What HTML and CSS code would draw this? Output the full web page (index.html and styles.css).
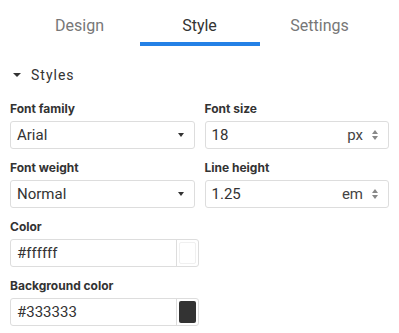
FILE: index.html
```html
<!DOCTYPE html>
<html lang="en">
<head>
    <meta charset="UTF-8" />
    <meta name="viewport" content="width=device-width, initial-scale=1" />
    <title>Style panel</title>
    <link rel="stylesheet" href="styles.css">
</head>
<body>
    <div class="tabs">
        <div class="tab">Design</div>
        <div class="tab active">Style</div>
        <div class="tab">Settings</div>
    </div>

    <div class="section-title">
        <span class="caret-down"></span>
        <span>Styles</span>
    </div>

    <div class="grid">
        <div class="field">
            <label>Font family</label>
            <div class="box select">
                <span class="value">Arial</span>
                <span class="caret-down small"></span>
            </div>
        </div>
        <div class="field">
            <label>Font size</label>
            <div class="box number">
                <span class="value">18</span>
                <span class="unit">px</span>
                <span class="spin"><i class="up"></i><i class="down"></i></span>
            </div>
        </div>
        <div class="field">
            <label>Font weight</label>
            <div class="box select">
                <span class="value">Normal</span>
                <span class="caret-down small"></span>
            </div>
        </div>
        <div class="field">
            <label>Line height</label>
            <div class="box number">
                <span class="value">1.25</span>
                <span class="unit">em</span>
                <span class="spin"><i class="up"></i><i class="down"></i></span>
            </div>
        </div>
        <div class="field">
            <label>Color</label>
            <div class="box color">
                <span class="value">#ffffff</span>
                <span class="swatch-cell"><span class="swatch light"></span></span>
            </div>
        </div>
        <div class="field"></div>
        <div class="field">
            <label>Background color</label>
            <div class="box color">
                <span class="value">#333333</span>
                <span class="swatch-cell"><span class="swatch dark"></span></span>
            </div>
        </div>
    </div>
</body>
</html>
```

FILE: styles.css
```css
body {
    margin: 0;
    padding: 0 10px;
    font-family: Roboto, "Liberation Sans", sans-serif;
    color: #333;
    background: #fff;
}
.tabs {
    display: flex;
    justify-content: center;
    padding-top: 15px;
}
.tab {
    width: 120px;
    text-align: center;
    font-size: 16px;
    color: #777;
    height: 27px;
    line-height: 22px;
    border-bottom: 4px solid transparent;
}
.tab.active {
    color: #333;
    border-bottom-color: #2481e6;
}
.section-title {
    display: flex;
    align-items: center;
    margin-top: 19px;
    height: 20px;
    font-size: 14px;
    letter-spacing: 1px;
    color: #333;
}
.caret-down {
    width: 0;
    height: 0;
    border-left: 4px solid transparent;
    border-right: 4px solid transparent;
    border-top: 4px solid #333;
    margin: 0 10px 0 3px;
}
.caret-down.small {
    border-left-width: 3.5px;
    border-right-width: 3.5px;
    border-top-width: 4px;
    margin: 0 0 0 auto;
}
.grid {
    display: grid;
    grid-template-columns: minmax(0, 1fr) minmax(0, 1fr);
    column-gap: 10px;
    margin-top: 13px;
}
.field {
    display: flex;
    flex-direction: column;
    margin-bottom: 8px;
}
label {
    font-family: Inter, "Liberation Sans", sans-serif;
    font-weight: bold;
    font-size: 12px;
    height: 23px;
    line-height: 22px;
    color: #333;
    white-space: nowrap;
}
.box {
    display: flex;
    align-items: center;
    height: 28px;
    box-sizing: border-box;
    border: 1px solid #ddd;
    border-radius: 3px;
    padding: 0 10px 0 6px;
    font-size: 15px;
}
.value {
    flex: 1;
}
.unit {
    margin-right: 9px;
    color: #444;
}
.spin {
    display: flex;
    flex-direction: column;
    gap: 2px;
}
.spin i {
    width: 0;
    height: 0;
    border-left: 3.5px solid transparent;
    border-right: 3.5px solid transparent;
}
.spin .up {
    border-bottom: 4px solid #888;
}
.spin .down {
    border-top: 4px solid #888;
}
.box.color {
    padding-right: 0;
    width: 189px;
}
.swatch-cell {
    align-self: stretch;
    width: 22px;
    box-sizing: border-box;
    border-left: 1px solid #ddd;
    padding: 2px;
    display: flex;
}
.swatch {
    flex: 1;
    border-radius: 2px;
}
.swatch.light {
    background: #fff;
    border: 1px solid #f0f0f0;
}
.swatch.dark {
    background: #333;
}
```
